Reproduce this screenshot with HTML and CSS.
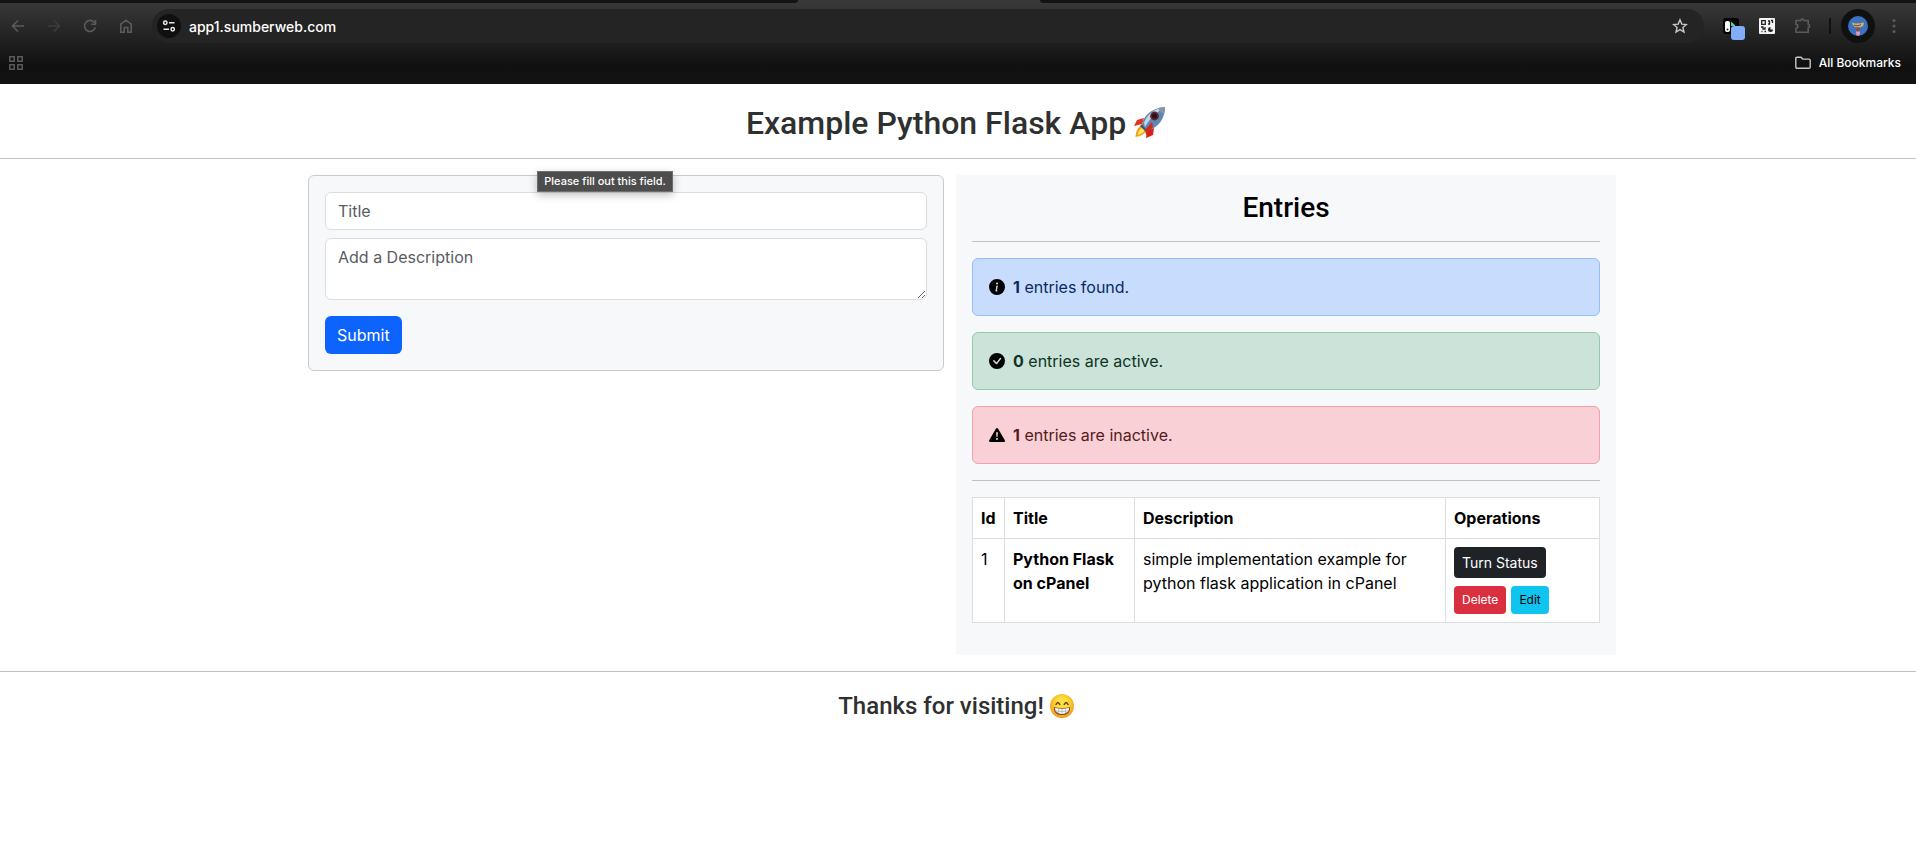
FILE: index.html
```html
<!DOCTYPE html>
<html lang="en">
<head>
  <meta charset="UTF-8">
  <meta name="viewport" content="width=device-width, initial-scale=1.0">
  <title>Example Python Flask App</title>
  <link rel="stylesheet" href="styles.css">
</head>
<body>

  <div class="browser">
    <div class="tab-strip">
      <div class="tab-side left"></div>
      <div class="tab-active"></div>
      <div class="tab-side right"></div>
    </div>

    <div class="toolbar">
      <div class="nav">
        <button class="icon-btn" aria-label="Back">
          <svg width="16" height="16" viewBox="0 0 16 16" fill="none" stroke="#595b5e" stroke-width="1.6"><path d="M14 8H3M8 2.5 2.5 8 8 13.5"/></svg>
        </button>
        <button class="icon-btn" aria-label="Forward">
          <svg width="16" height="16" viewBox="0 0 16 16" fill="none" stroke="#3b3c3e" stroke-width="1.6"><path d="M2 8h11M8 2.5 13.5 8 8 13.5"/></svg>
        </button>
        <button class="icon-btn" aria-label="Reload">
          <svg width="16" height="16" viewBox="0 0 16 16" fill="none" stroke="#595b5e" stroke-width="1.6"><path d="M13.3 9.500A5.500 5.500 0 1 1 12.500 4.700M13.500 2v4.200H9.300"/></svg>
        </button>
        <button class="icon-btn" aria-label="Home">
          <svg width="16" height="16" viewBox="0 0 16 16" fill="none" stroke="#595b5e" stroke-width="1.6"><path d="M2.800 14.200V6.200L8 2.200l5.200 4v8H9.800V9.500H6.200v4.700z"/></svg>
        </button>
      </div>

      <div class="address">
        <button class="site-info" aria-label="Site information">
          <svg width="14" height="14" viewBox="0 0 14 14" fill="none" stroke="#e8e8e8" stroke-width="1.5"><circle cx="3.300" cy="3.800" r="1.700"/><path d="M7 3.800h5.500M1.500 10.200H7"/><circle cx="10.700" cy="10.200" r="1.700"/></svg>
        </button>
        <input class="url" type="text" value="app1.sumberweb.com" aria-label="Address">
        <button class="icon-btn" aria-label="Bookmark this tab">
          <svg width="16" height="16" viewBox="0 0 16 16" fill="none" stroke="#c7c7c7" stroke-width="1.4"><path d="m8 1.800 1.800 4.300 4.600.4-3.500 3 1.100 4.500L8 11.600 4 14l1.100-4.500-3.500-3 4.600-.4z"/></svg>
        </button>
      </div>

      <div class="tools">
        <button class="icon-btn ext" aria-label="Extension">
          <svg width="22" height="22" viewBox="0 0 22 22"><rect width="16" height="16" rx="3" fill="#000"/><rect x="2" y="3" width="5" height="11" rx="2" fill="#fff"/><circle cx="4.500" cy="11.500" r="1" fill="#222"/><path d="M8 3.500 12 7v1H8z" fill="#3ddc84"/><rect x="8" y="8" width="14" height="14" rx="3" fill="#82adf8"/></svg>
        </button>
        <button class="icon-btn" aria-label="QR code">
          <svg width="16" height="16" viewBox="0 0 16 16"><rect width="16" height="16" rx="1" fill="#f4f4f4"/><g fill="none" stroke="#222" stroke-width="1.3"><path d="M2.700 2.700h3.600v3.600H2.700zM9 3h1.500v3H9M12 2.500h1.500V5M2 9h2v2h2V9M2.500 13.500h1M5.500 13.500h1.500"/></g><circle cx="11.500" cy="11.500" r="2.500" fill="#222"/><path d="M11.500 11.500V8.500h3v3z" fill="#f4f4f4"/></svg>
        </button>
        <button class="icon-btn" aria-label="Extensions">
          <svg width="16" height="16" viewBox="0 0 16 16" fill="none" stroke="#595b5e" stroke-width="1.6"><path d="M1 2.500h4.800a1.500 1.500 0 0 1 3 0h4.400v4a1.500 1.500 0 0 1 0 3v4.700H1v-4a1.900 1.900 0 0 0 0-3.800z"/></svg>
        </button>
        <span class="divider"></span>
        <button class="avatar" aria-label="Profile">
          <svg width="20" height="20" viewBox="0 0 20 20"><circle cx="10" cy="10" r="10" fill="#3d73bd"/><path d="M4 7c1.500-1 2.500 1 5 .5s3.500.5 4.500-.5 2-.5 2.500.5c-.5 3-3 4-6 4S5 10 4 7z" fill="#d6ae72"/><path d="M6 9c2 1 5 1 7-.5" stroke="#68451f" fill="none"/><path d="M8.500 11.500h3v4h-3z" fill="#8b4b35"/><path d="M8 15.500h4l-.5 4h-3z" fill="#e29bc0"/></svg>
        </button>
        <button class="icon-btn" aria-label="Menu">
          <svg width="16" height="16" viewBox="0 0 16 16" fill="#595b5e"><circle cx="8" cy="2.500" r="1.500"/><circle cx="8" cy="8" r="1.500"/><circle cx="8" cy="13.500" r="1.500"/></svg>
        </button>
      </div>
    </div>

    <div class="bookmarks">
      <button class="icon-btn" aria-label="Apps">
        <svg width="16" height="16" viewBox="0 0 16 16" fill="none" stroke="#595b5e" stroke-width="1.5"><path d="M1.800 1.800h4.400v4.400H1.800zM9.800 1.800h4.400v4.400H9.800zM1.800 9.800h4.400v4.400H1.800zM9.800 9.800h4.400v4.400H9.800z"/></svg>
      </button>
      <button class="all-bookmarks">
        <svg width="16" height="14" viewBox="0 0 16 14" fill="none" stroke="#c7c7c7" stroke-width="1.4"><path d="M.8 2.500q0-1.200 1.200-1.200h4l1.800 1.800H14q1.200 0 1.200 1.200V11q0 1.200-1.200 1.200H2Q.8 12.200.8 11z"/></svg>
        All Bookmarks
      </button>
    </div>
  </div>

  <div class="page">
    <header class="header">
      <h1>Example Python Flask App
        <svg class="emoji" viewBox="0 0 32 32" role="img" aria-label="rocket"><path d="M10 12 3 14 0 20l8-2z" fill="#e8301c"/><path d="m20 22-1 7-7 3 1-8z" fill="#e01e10"/><path d="M7 20c-4 2-5 6-5.500 11C7 30 11 28 12 24z" fill="#f59a16"/><path d="M8 22c-3 2-4 4-4.500 7C7 28 9 27 11 24z" fill="#ffec5c"/><path d="M8 18C10 9 18 2 31 1c0 11-6 20-17 24z" fill="#5d87b4"/><path d="M10 17C13 8 20 3 31 1 23 6 16 12 11 21z" fill="#c6d5df"/><path d="M24 2q4-1 7-1 0 4-1 7-4-1-6-6z" fill="#8296a6"/><circle cx="20.500" cy="10" r="4.400" fill="#6c2022"/><circle cx="20.500" cy="10" r="2.500" fill="#171a22"/><path d="m8 18 6 7-2 1-6-6z" fill="#3c556e"/><path d="m18 16-7 8 1 5 7-8z" fill="#cf2b20"/></svg>
      </h1>
    </header>
    <hr>

    <main class="container">
      <div class="col">
        <form class="card">
          <input class="field" type="text" placeholder="Title" aria-label="Title" required>
          <textarea class="field" rows="2" placeholder="Add a Description" aria-label="Description"></textarea>
          <button class="btn btn-primary" type="submit">Submit</button>
          <div class="tooltip" role="tooltip">Please fill out this field.</div>
        </form>
      </div>

      <section class="entries">
        <h2>Entries</h2>
        <hr>
        <div class="alert alert-info">
          <svg width="16" height="16" viewBox="0 0 16 16"><path d="M8 16A8 8 0 1 0 8 0a8 8 0 0 0 0 16zm.93-9.412-1 4.705c-.07.34.029.533.304.533.194 0 .487-.07.686-.246l-.088.416c-.287.346-.92.598-1.465.598-.703 0-1.002-.422-.808-1.319l.738-3.468c.064-.293.006-.399-.287-.47l-.451-.081.082-.381 2.290-.287zM8 5.500a1 1 0 1 1 0-2 1 1 0 0 1 0 2z"/></svg>
          <p><strong>1</strong> entries found.</p>
        </div>
        <div class="alert alert-success">
          <svg width="16" height="16" viewBox="0 0 16 16"><path d="M16 8A8 8 0 1 1 0 8a8 8 0 0 1 16 0zm-3.970-3.030a.75.75 0 0 0-1.080.022L7.477 9.417 5.384 7.323a.75.75 0 0 0-1.060 1.060L6.970 11.030a.75.75 0 0 0 1.079-.02l3.992-4.990a.75.75 0 0 0-.010-1.050z"/></svg>
          <p><strong>0</strong> entries are active.</p>
        </div>
        <div class="alert alert-danger">
          <svg width="16" height="16" viewBox="0 0 16 16"><path d="M8.982 1.566a1.130 1.130 0 0 0-1.960 0L.165 13.233c-.457.778.091 1.767.980 1.767h13.713c.889 0 1.438-.990.980-1.767L8.982 1.566zM8 5c.535 0 .954.462.900.995l-.350 3.507a.552.552 0 0 1-1.100 0L7.100 5.995A.905.905 0 0 1 8 5zm.002 6a1 1 0 1 1 0 2 1 1 0 0 1 0-2z"/></svg>
          <p><strong>1</strong> entries are inactive.</p>
        </div>
        <hr>

        <table class="table">
          <thead>
            <tr>
              <th class="col-id">Id</th>
              <th class="col-title">Title</th>
              <th>Description</th>
              <th class="col-ops">Operations</th>
            </tr>
          </thead>
          <tbody>
            <tr>
              <td>1</td>
              <td><strong>Python Flask on cPanel</strong></td>
              <td>simple implementation example for python flask application in cPanel</td>
              <td>
                <div class="ops">
                  <button class="btn btn-sm btn-dark">Turn Status</button>
                  <div class="ops-row">
                    <button class="btn btn-xs btn-danger">Delete</button>
                    <button class="btn btn-xs btn-info">Edit</button>
                  </div>
                </div>
              </td>
            </tr>
          </tbody>
        </table>
      </section>
    </main>

    <hr>
    <footer class="footer">
      <h3>Thanks for visiting!
        <svg class="emoji" viewBox="0 0 32 32" role="img" aria-label="grin"><defs><radialGradient id="face" cx=".5" cy=".4" r=".6"><stop offset=".4" stop-color="#ffe03e"/><stop offset="1" stop-color="#f0951c"/></radialGradient></defs><circle cx="16" cy="16" r="16" fill="url(#face)"/><path d="M8 14q2.500-5.500 5 0M19 14q2.500-5.500 5 0" fill="none" stroke="#6b3d10" stroke-width="2" stroke-linecap="round"/><path d="M5 17.500q11 2 22 0Q27 28 16 28T5 17.500z" fill="#7a4a1c"/><path d="M6.500 18.800q9.500 1.600 19 0-.5 7.700-9.500 7.700t-9.500-7.700z" fill="#fff"/><path d="M7 22.500q9 1.500 18 0M11.500 19.500v6M16 19.500v7M20.500 19.500v6" fill="none" stroke="#a8a8a8"/></svg>
      </h3>
    </footer>
  </div>

</body>
</html>
```

FILE: styles.css
```css
* {
  box-sizing: border-box;
}

body {
  margin: 0;
  font-family: Inter, "Liberation Sans", sans-serif;
  font-size: 16px;
  line-height: 24px;
  color: #000;
  background: #fff;
}

button,
input,
textarea {
  font-family: inherit;
  margin: 0;
}

h1, h2, h3, p {
  margin: 0;
}

h1, h2, h3 {
  font-family: Roboto, "Liberation Sans", sans-serif;
  font-weight: 500;
  text-align: center;
}

/* browser bar */
.browser {
  background: linear-gradient(#383838 0, #383838 3px, #101010 66px, #131313 84px);
}

.tab-strip {
  display: flex;
  height: 3px;
}

.tab-side {
  flex: 798;
  background: #131313;
}

.tab-side.right {
  flex: 876;
}

.tab-active {
  flex: 242;
}

.tab-side.left {
  border-bottom-right-radius: 3px;
}

.tab-side.right {
  border-bottom-left-radius: 3px;
}

.toolbar {
  display: flex;
  align-items: center;
  padding: 6px 14px 6px 10px;
}

.nav {
  display: flex;
  gap: 20px;
  margin-right: 18px;
}

.icon-btn {
  display: flex;
  padding: 0;
  border: 0;
  background: none;
}

.address {
  flex: 1;
  display: flex;
  align-items: center;
  height: 34px;
  padding: 0 16px 0 5px;
  border-radius: 17px;
  background: #242424;
}

.site-info {
  display: flex;
  align-items: center;
  justify-content: center;
  width: 24px;
  height: 24px;
  padding: 0;
  border: 0;
  border-radius: 50%;
  background: #101010;
}

.url {
  flex: 1;
  padding: 0 8px;
  border: 0;
  outline: 0;
  background: none;
  color: #fff;
  font-size: 14px;
  font-weight: 500;
}

.tools {
  display: flex;
  align-items: center;
  gap: 20px;
  margin-left: 19px;
}

.ext {
  margin: 6px -6px 0 0;
}

.divider {
  width: 2px;
  height: 16px;
  margin: 0 -10px 0 -2px;
  background: #101010;
}

.avatar {
  display: flex;
  align-items: center;
  justify-content: center;
  width: 34px;
  height: 34px;
  padding: 0;
  border: 0;
  border-radius: 50%;
  background: #101010;
}

.avatar + .icon-btn {
  margin-left: -9px;
}

.bookmarks {
  display: flex;
  align-items: center;
  justify-content: space-between;
  height: 35px;
  padding: 0 15px 8px 8px;
}

.all-bookmarks {
  display: flex;
  align-items: center;
  gap: 8px;
  padding: 0;
  border: 0;
  background: none;
  color: #fff;
  font-size: 12px;
  font-weight: 500;
}

/* page */
.page {
  padding-right: 4px;
}

hr {
  height: 1px;
  margin: 16px 0;
  border: 0;
  background: #bfc0c1;
}

.page > hr {
  margin-right: -4px;
}

.header,
.footer {
  color: #2f3030;
}

.header {
  padding-top: 20px;
}

.footer {
  padding-top: 4px;
}

.header h1 {
  font-size: 32px;
  line-height: 38px;
}

.footer h3 {
  font-size: 24px;
  line-height: 29px;
}

.emoji {
  width: 1em;
  height: 1em;
  vertical-align: -4px;
}

.container {
  display: grid;
  grid-template-columns: 1fr 1fr;
  align-items: start;
  max-width: 1320px;
  margin: 0 auto;
}

.col {
  padding: 0 12px;
}

.card {
  position: relative;
  display: flex;
  flex-direction: column;
  align-items: flex-start;
  padding: 16px;
  border: 1px solid #c8cacd;
  border-radius: 6px;
  background: #f7f8fa;
}

.field {
  display: block;
  width: 100%;
  margin-bottom: 8px;
  padding: 6px 12px;
  border: 1px solid #dadde1;
  border-radius: 6px;
  background: #fff;
  font-size: 16px;
  line-height: 24px;
}

textarea.field {
  margin-bottom: 16px;
}

.field::placeholder {
  color: #595c5f;
}

.tooltip {
  position: absolute;
  top: -5px;
  left: 36%;
  padding: 0 6px;
  border: 1px solid #6e6e6e;
  background: #4d4d4d;
  color: #fff;
  font-size: 11px;
  font-weight: 500;
  line-height: 19px;
  white-space: nowrap;
  box-shadow: 0 3px 8px rgba(0, 0, 0, 0.25);
}

.btn {
  padding: 7px 12px;
  border: 0;
  border-radius: 6px;
  color: #fff;
  font-size: 16px;
  line-height: 24px;
}

.btn-sm,
.btn-xs {
  padding: 5px 8px;
  border-radius: 4px;
}

.btn-sm {
  font-size: 14px;
  line-height: 21px;
}

.btn-xs {
  font-size: 12px;
  line-height: 18px;
}

.btn-primary {
  background: #0d63fd;
}

.btn-dark {
  background: #1f2328;
}

.btn-danger {
  background: #d92f3f;
}

.btn-info {
  background: #10c4f0;
  color: #000;
}

.entries {
  padding: 16px;
  background: #f7f8fa;
}

.entries h2 {
  font-size: 28px;
  line-height: 34px;
}

.alert {
  display: flex;
  align-items: center;
  gap: 8px;
  margin-bottom: 16px;
  padding: 16px;
  border: 1px solid;
  border-radius: 6px;
}

.alert-info {
  border-color: #94bdfe;
  background: #c8ddfe;
  color: #0a2a5e;
}

.alert-success {
  border-color: #94c9b0;
  background: #cbe3d9;
  color: #0e3423;
}

.alert-danger {
  border-color: #f0a1aa;
  background: #f8d0d5;
  color: #551a20;
}

.table {
  width: 100%;
  margin-bottom: 16px;
  border-collapse: collapse;
  background: #fff;
}

.table th,
.table td {
  padding: 8px;
  border: 1px solid #dadde1;
  text-align: left;
  vertical-align: top;
}

.col-id {
  width: 32px;
}

.col-title {
  width: 130px;
}

.col-ops {
  width: 154px;
}

.ops {
  display: flex;
  flex-direction: column;
  align-items: flex-start;
  gap: 8px;
}

.ops-row {
  display: flex;
  gap: 5px;
}
```
